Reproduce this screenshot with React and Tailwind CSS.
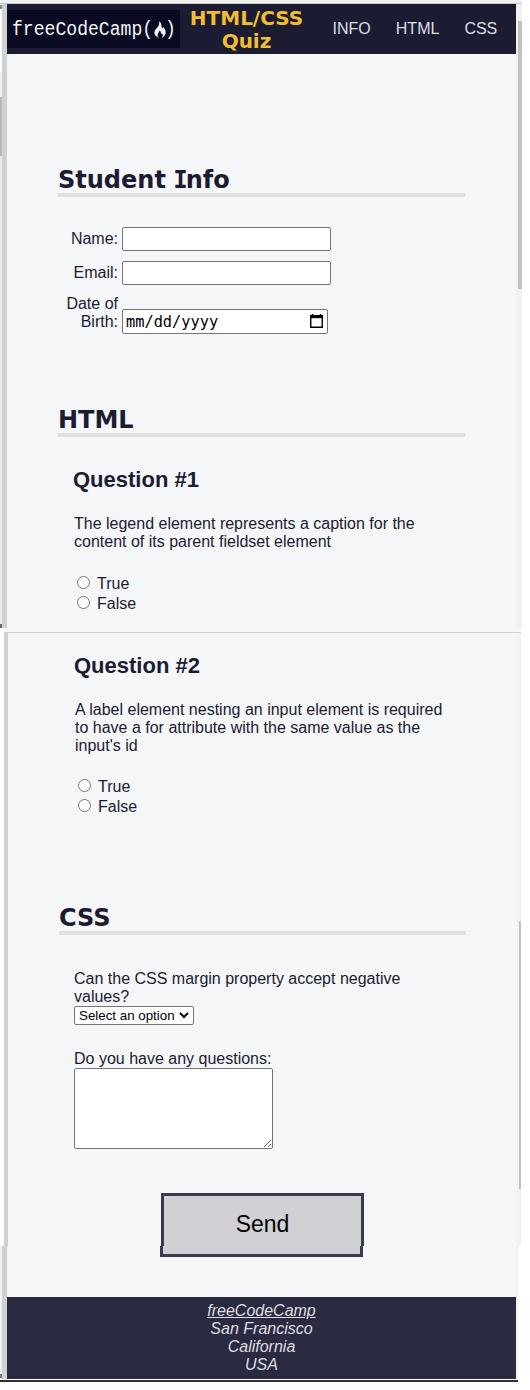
import React from "react";

const Heading = ({ children }) => (
  <h2 className="h-8 w-[407px] whitespace-nowrap border-b-4 border-[#dfdfe2] font-['DejaVu_Sans',sans-serif] text-[24px] font-bold leading-[30px]">
    {children}
  </h2>
);

const Option = ({ name, children }) => (
  <label className="flex h-5 items-start">
    <input
      type="radio"
      name={name}
      className="mt-px size-[13px] shrink-0 appearance-none rounded-full border border-[#767676] bg-white checked:bg-[#0075ff]"
    />
    <span className="ml-[7px] leading-[18px]">{children}</span>
  </label>
);

const Field = "rounded-[2px] border border-[#767676] bg-white";

function Header() {
  return (
    <header className="flex h-[50px] shrink-0 items-start bg-[#1b1b32]">
      <div className="mt-[6px] flex h-[38px] w-[173px] items-center bg-[#0a0a23] pl-[5px] font-['Liberation_Mono',monospace] text-[18.1px] leading-[38px] text-[#f5f6f7]">
        <span className="w-[142px] scale-y-[1.12] whitespace-nowrap">freeCodeCamp(</span>
        <svg viewBox="0 0 12 17" className="h-[17px] w-[12px] shrink-0" fill="currentColor">
          <path d="M5.2 0C8 2.6 7 5.2 8.2 7.4C8.9 7.2 9 6.4 8.9 5.4C11.4 8 12.2 10.8 11.4 13C10.8 14.9 9.6 16.1 7.8 16.8C9 15.2 9.2 13.7 8.3 12.8C7.9 13.2 7.3 13 7.1 12.2C6.8 11.1 6.5 10 5.5 9.2C5.6 11.2 3.6 12.2 3.6 14.2C3.6 15.3 4.1 16.2 4.8 16.8C2 15.9.2 13.8.4 11.2C.7 8.2 4 6.7 4.9 4C5.3 2.7 5.5 1.3 5.2 0Z" />
        </svg>
        <span className="-ml-px scale-y-[1.12]">)</span>
      </div>
      <h1 className="ml-[9px] mt-[3px] w-[115px] text-center font-['DejaVu_Sans',sans-serif] text-[20px] font-bold leading-[23px] text-[#f1be32]">
        HTML/CSS Quiz
      </h1>
      <nav className="ml-[28.6px] mt-[16px] flex gap-[25px] leading-[18px] text-[#dfdfe2]">
        <a href="#info">INFO</a>
        <a href="#html">HTML</a>
        <a href="#css">CSS</a>
      </nav>
    </header>
  );
}

function StudentInfo() {
  return (
    <section id="info" className="pl-[51px] pt-[111px]">
      <Heading>
        Student <span className="-ml-px -mr-[2px] font-['DejaVu_Sans_Mono',monospace]">I</span>nfo
      </Heading>
      <div className="mt-[30px] flex h-6 items-start">
        <label className="mr-1 mt-[3px] w-[60px] text-right leading-[18px]">Name:</label>
        <input className={`${Field} h-6 w-[209px]`} />
      </div>
      <div className="mt-[10px] flex h-6 items-start">
        <label className="mr-1 mt-[3px] w-[60px] text-right leading-[18px]">Email:</label>
        <input className={`${Field} h-6 w-[209px]`} />
      </div>
      <div className="mt-[9px] flex h-10 items-end">
        <label className="mb-[3px] mr-1 w-[60px] text-right leading-[18px]">Date of Birth:</label>
        <div className={`${Field} flex h-[25px] w-[206px] items-center justify-between pl-[3px] pr-[4px] text-black`}>
          <span className="pt-[2px] font-['DejaVu_Sans_Mono',monospace] text-[15.3px] leading-[21px]">mm/dd/yyyy</span>
          <svg viewBox="0 0 13 14" className="mb-px h-[14px] w-[13px]" fill="none" stroke="currentColor">
            <path d="M.75 1.8H12.25V13.25H.75Z" strokeWidth="1.4" />
            <path d="M0 3H13" strokeWidth="2.4" />
            <path d="M2.5 0V2M10.5 0V2" strokeWidth="1.4" />
          </svg>
        </div>
      </div>
    </section>
  );
}

export default function App() {
  return (
    <div className="flex h-[1390px] w-[530px] flex-col overflow-hidden bg-white font-['Liberation_Sans',Arial,sans-serif] text-[16px] text-[#1b1b32]">
      <div className="h-[3px] w-[522px] shrink-0 bg-[#f1f1f1]" />
      <div className="h-px w-[522px] shrink-0 bg-[#c9c9cd]" />

      <div className="flex h-[624px] shrink-0">
        <div className="w-[2px]">
          <div className="mt-px h-[4px] bg-[#888888]" />
          <div className="h-[62px]" />
          <div className="h-[26px] bg-[#f0f0f0]" />
          <div className="h-[59px] bg-[#b8b8b8]" />
          <div className="h-[468px] bg-[#e9e9e9]" />
          <div className="h-[4px] bg-[#666666]" />
        </div>
        <div className="w-[5px] bg-[#d0d0d5]" />
        <main className="w-[509px] bg-[#f5f6f7]">
          <Header />
          <StudentInfo />
          <section id="html" className="pl-[51px] pt-[71px]">
            <Heading>HTML</Heading>
            <div className="pl-[15px]">
              <h3 className="mt-[30px] text-[22px] font-bold leading-[25px]">Question #1</h3>
              <p className="ml-px mt-[23px] w-[376px] leading-[18px]">
                The legend element represents a caption for the content of its parent fieldset element
              </p>
              <div className="ml-[4px] mt-[24px]">
                <Option name="q1">True</Option>
                <Option name="q1">False</Option>
              </div>
            </div>
          </section>
        </main>
        <div className="w-[2px] bg-[#f1f1f1]" />
        <div className="w-[4px] bg-[#f1f1f1] pt-[17px]">
          <div className="h-[268px] bg-[#c1c1c1]" />
        </div>
      </div>

      <div className="ml-1 flex h-[4px] w-[517px] shrink-0 items-start bg-[#f5f6f7]" />
      <div className="ml-1 h-px w-[517px] shrink-0 bg-[#d0d0d5]" />

      <div className="ml-1 flex h-[613px] shrink-0">
        <div className="w-1 bg-[#d0d0d5]" />
        <main className="w-[509px] bg-[#f5f6f7] pl-[51px]">
          <div className="pl-[15px] pt-[20px]">
            <h3 className="text-[22px] font-bold leading-[25px]">Question #2</h3>
            <p className="ml-px mt-[23px] w-[376px] leading-[18px]">
              A label element nesting an input element is required to have a for attribute with the same value as the input's id
            </p>
            <div className="ml-[4px] mt-[23px]">
              <Option name="q2">True</Option>
              <Option name="q2">False</Option>
            </div>
          </div>
          <section id="css" className="pt-[85px]">
            <Heading>CSS</Heading>
            <div className="flex flex-col items-start pl-[15px]">
              <label className="mt-[35px] w-[345px] leading-[18px]">
                Can the CSS margin property accept negative values?
              </label>
              <div className={`${Field} flex h-[19px] w-[120px] items-center justify-between pl-[4px] pr-[4px] text-[13.333px] leading-[17px] text-black`}>
                <span className="whitespace-nowrap">Select an option</span>
                <svg viewBox="0 0 10 7" className="h-[7px] w-[10px] shrink-0" fill="none" stroke="currentColor" strokeWidth="2">
                  <path d="M1 1L5 5L9 1" />
                </svg>
              </div>
              <label className="mt-[25px] leading-[18px]">Do you have any questions:</label>
              <textarea className={`${Field} h-[81px] w-[199px] resize`} />
            </div>
          </section>
          <button className="ml-[102px] mt-[44px] block h-[53px] w-[203px] border-x-[3px] border-t-[3px] border-[#3b3b4f] bg-[#d0d0d5] pb-px pt-[6px] text-[23px] leading-[26px] text-black">
            Send
          </button>
        </main>
        <div className="w-[2px] bg-[#f1f1f1]" />
        <div className="w-[2px] bg-[#f1f1f1] pt-[288px]">
          <div className="h-[268px] bg-[#c1c1c1]" />
        </div>
      </div>

      <div className="flex h-[133px] shrink-0">
        <div className="w-[2px] bg-[#f0f0f0] pt-[128px]">
          <div className="h-[4px] bg-[#777777]" />
        </div>
        <div className="w-[5px] bg-[#d0d0d5]" />
        <div className="w-[509px] bg-[#f5f6f7]">
          <div className="ml-[153px] h-[11px] w-[203px] border-x-[3px] border-b-[3px] border-[#3b3b4f] bg-[#d0d0d5]" />
          <footer className="mt-[40px] h-[82px] bg-[#2a2a40] pt-[5px] text-center italic leading-[18px] text-[#dfdfe2]">
            <address>
              <a href="#info" className="underline">freeCodeCamp</a>
              <br />
              San Francisco
              <br />
              California
              <br />
              USA
            </address>
          </footer>
        </div>
        <div className="w-[2px] bg-[#f1f1f1]" />
      </div>
      <div className="mt-px h-[2px] w-[518px] shrink-0 bg-[#382c2e]" />
    </div>
  );
}
